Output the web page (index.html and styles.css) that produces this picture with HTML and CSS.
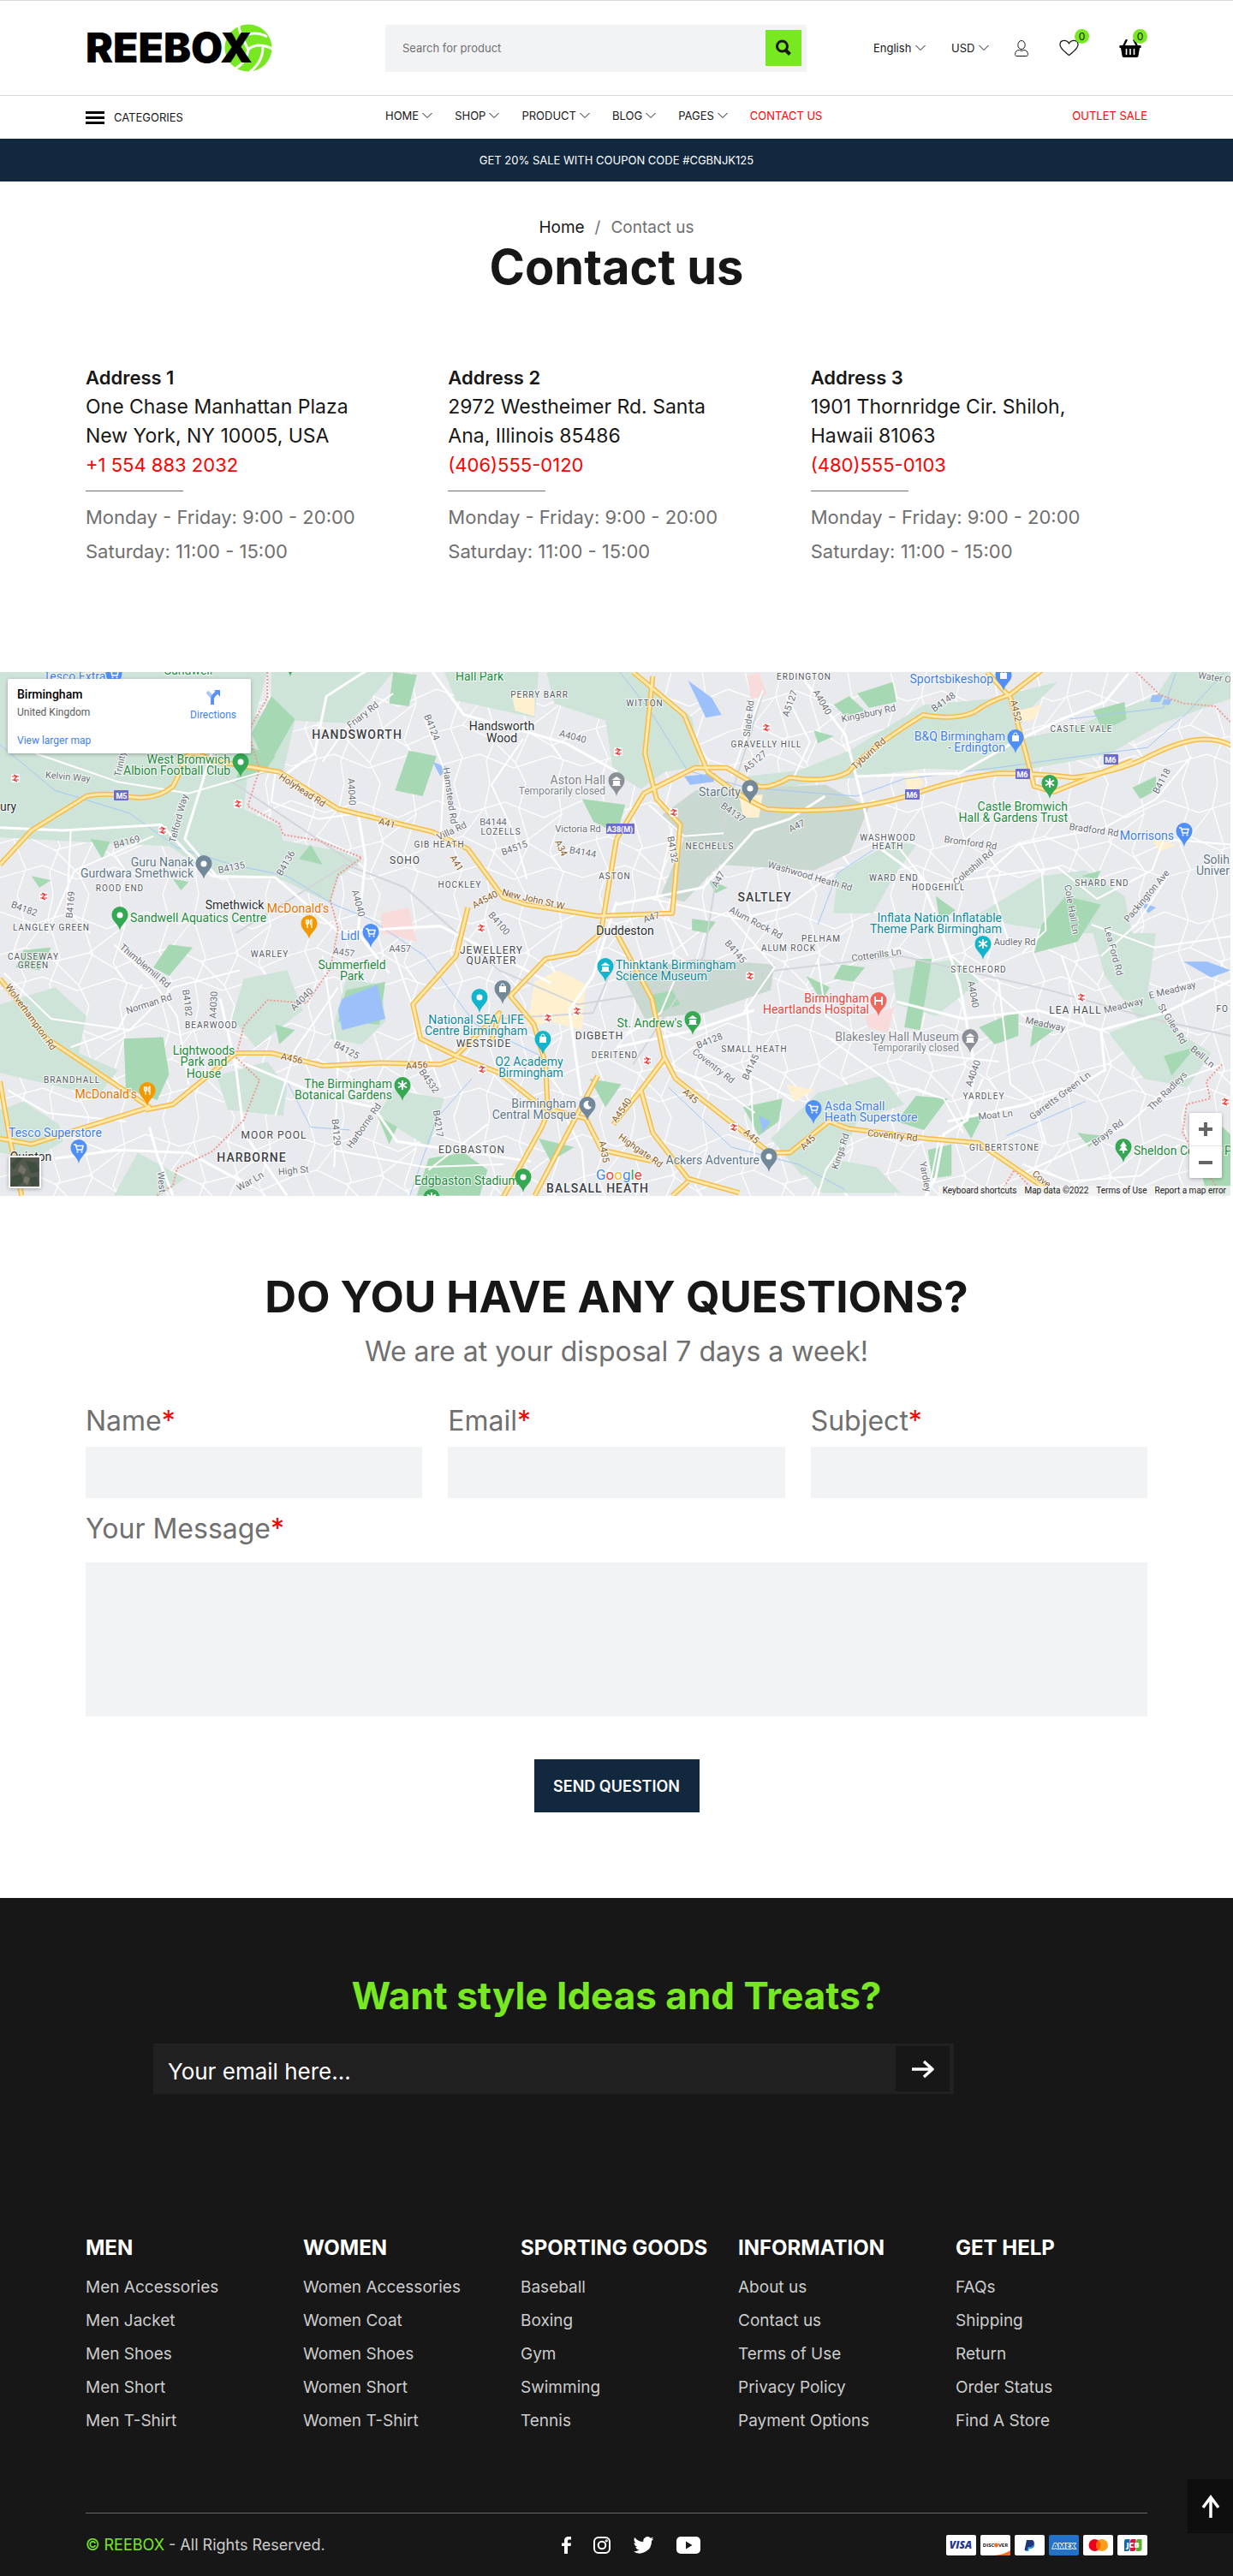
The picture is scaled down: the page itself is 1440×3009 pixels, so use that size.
FILE: index.html
```
<!DOCTYPE html>
<html lang="en">
<head>
<meta charset="utf-8">
<meta name="viewport" content="width=device-width, initial-scale=1">
<title>Contact us – Reebox</title>
<link rel="stylesheet" href="styles.css">
</head>
<body>
<svg class="defs" aria-hidden="true">
  <symbol id="chevron" viewBox="0 0 12 8"><path d="M.5 1l5.500 5.500L11.500 1" fill="none" stroke="currentColor"/></symbol>
</svg>

<header>
  <div class="topbar wrap">
    <a class="logo" href="#" aria-label="Reebox">
      <svg viewBox="0 0 218 56" width="218" height="56">
        <circle cx="190" cy="28" r="27.500" fill="#78e821"/>
        <g fill="none" stroke="#fff" stroke-width="3">
          <path d="M179 0c0 7 1 10 4 15M182 15c10-5 21-5 30 0M182 14l8 16M190 30c7-7 18-6 28-1M190 29c-1 9-6 18-15 23M207 27c0 12-5 21-15 29M174 21l6 17"/>
        </g>
        <text class="logo-text" x="0" y="45">REEBOX</text>
      </svg>
    </a>
    <form class="search">
      <input type="search" aria-label="Search for product" placeholder="Search for product">
      <button type="button" aria-label="Search"><svg width="20" height="20" viewBox="0 0 20 20" fill="none" stroke="#171717"><circle cx="8.500" cy="8" r="6" stroke-width="3"/><path d="M12.500 12.500l5 5" stroke-width="4"/></svg></button>
    </form>
    <div class="tools">
      <label class="pick"><select aria-label="Language"><option>English</option></select><svg width="12" height="8"><use href="#chevron"/></svg></label>
      <label class="pick"><select aria-label="Currency"><option>USD</option></select><svg width="12" height="8"><use href="#chevron"/></svg></label>
      <a class="tool" href="#" aria-label="Account"><svg width="16" height="19" viewBox="0 0 16 19" fill="none" stroke="#171717"><ellipse cx="8" cy="5.500" rx="4.200" ry="5"/><path d="M.6 16.500c0-3 1.600-5 4.600-5 2 1 3.600 1 5.600 0 3 0 4.600 2 4.600 5 0 1-.6 2-1.600 2H2.200c-1 0-1.600-1-1.600-2z"/></svg></a>
      <a class="tool" href="#" aria-label="Wishlist"><svg width="23" height="20" viewBox="0 0 24 20" fill="none" stroke="#171717" stroke-width="1.300"><path d="M12 19C7 14.500 1 11 1 5.800 1 0 9 -.8 12 4.500 15-.8 23 0 23 5.800 23 11 17 14.500 12 19z"/></svg><span class="badge">0</span></a>
      <a class="tool" href="#" aria-label="Basket"><svg width="26" height="21" viewBox="0 0 26 21"><path d="M8.500 1L4.500 9M17.500 1l4 8" stroke="#000" stroke-width="2.400" stroke-linecap="round"/><path d="M1 7h24c1 0 1 3 0 3h-1l-1.500 9c-.2 1-.8 2-2 2h-15c-1.200 0-1.800-1-2-2L2 10H1C0 10 0 7 1 7z"/><path d="M8.500 11.500v6M13 11.500v6M17.500 11.500v6" stroke="#fff" stroke-width="1.600" stroke-linecap="round"/></svg><span class="badge">0</span></a>
    </div>
  </div>
  <div class="navbar">
    <div class="wrap navrow">
      <button class="categories" type="button"><svg width="22" height="15" viewBox="0 0 22 15"><path d="M0 1.500h22M0 7.500h22M0 13.500h22" stroke="#000" stroke-width="3"/></svg>CATEGORIES</button>
      <nav>
        <a href="#">HOME<svg width="12" height="8"><use href="#chevron"/></svg></a>
        <a href="#">SHOP<svg width="12" height="8"><use href="#chevron"/></svg></a>
        <a href="#">PRODUCT<svg width="12" height="8"><use href="#chevron"/></svg></a>
        <a href="#">BLOG<svg width="12" height="8"><use href="#chevron"/></svg></a>
        <a href="#">PAGES<svg width="12" height="8"><use href="#chevron"/></svg></a>
        <a class="red" href="#">CONTACT US</a>
      </nav>
      <a class="red outlet" href="#">OUTLET SALE</a>
    </div>
  </div>
  <p class="promo">GET 20% SALE WITH COUPON CODE #CGBNJK125</p>
</header>

<main>
  <section class="intro">
    <p class="crumbs"><a href="#">Home</a><span>/</span><span>Contact us</span></p>
    <h1>Contact us</h1>
  </section>

  <section class="addresses wrap">
    <address>
      <h2>Address 1</h2>
      <p class="street-lines">One Chase Manhattan Plaza<br>New York, NY 10005, USA</p>
      <a class="red" href="tel:+15548832032">+1 554 883 2032</a>
      <p class="hours">Monday - Friday: 9:00 - 20:00<br>Saturday: 11:00 - 15:00</p>
    </address>
    <address>
      <h2>Address 2</h2>
      <p class="street-lines">2972 Westheimer Rd. Santa<br>Ana, Illinois 85486</p>
      <a class="red" href="tel:4065550120">(406)555-0120</a>
      <p class="hours">Monday - Friday: 9:00 - 20:00<br>Saturday: 11:00 - 15:00</p>
    </address>
    <address>
      <h2>Address 3</h2>
      <p class="street-lines">1901 Thornridge Cir. Shiloh,<br>Hawaii 81063</p>
      <a class="red" href="tel:4805550103">(480)555-0103</a>
      <p class="hours">Monday - Friday: 9:00 - 20:00<br>Saturday: 11:00 - 15:00</p>
    </address>
  </section>

  <section class="map" aria-label="Map of Birmingham">
    <svg class="map-canvas" viewBox="0 0 1437 612">
      <defs>
        <pattern id="streets" width="170" height="130" patternUnits="userSpaceOnUse">
          <path d="M0 20L40 34 80 22 125 40 170 20M0 70l30-8 34 16 40-10 30 18 36-16M0 110l50-14 40 16 44-14 36 12M20 0l8 30-12 36 14 34-10 30M62 0l-6 28 14 46-12 30 4 26M104 0l-8 30 12 40-16 36 12 24M140 0l6 36-14 44 16 24-8 26M30 62l26-34M104 68l42-32M64 78l28 28M134 86l14 18" fill="none" stroke="#fff" stroke-width="1.200"/>
        </pattern>
        <g id="pin"><path d="M0 0C-1.500-8-9.500-10.500-9.500-18.500a9.500 9.500 0 0 1 19 0C9.500-10.500 1.500-8 0 0z"/></g>
        <g id="dot"><use href="#pin"/><circle cy="-18" r="3.500" fill="#fff"/></g>
        <g id="bag"><use href="#pin"/><path d="M-4-21h8v7h-8z" fill="#fff"/><path d="M-2-20v-2a2 2 0 0 1 4 0v2" fill="none" stroke="#fff"/></g>
        <g id="cart"><use href="#pin"/><path d="M-6-22h2.500l1.500 6h6l1-4.500h-8" fill="none" stroke="#fff" stroke-width="1.500"/><circle cx="-1.500" cy="-13.500" r="1.100" fill="#fff"/><circle cx="3.500" cy="-13.500" r="1.100" fill="#fff"/></g>
        <g id="fork"><use href="#pin"/><path d="M-3.500-23v4a1.500 1.500 0 0 0 3 0v-4M-2-23v10M3-13v-10c-2 1-2 4-1.500 6H3" fill="none" stroke="#fff" stroke-width="1.200"/></g>
        <g id="flower"><use href="#pin"/><path d="M0-24v11M-5-21.500l10 6M5-21.500l-10 6" stroke="#fff" stroke-width="2"/></g>
        <g id="hall"><use href="#pin"/><path d="M-5.500-19L0-23l5.500 4zM-4-18h8v5h-8zM-5-13h10v1H-5z" fill="#fff"/></g>
        <g id="rail"><rect x="-5" y="-5" width="10" height="10" rx="2" fill="#fff"/><path d="M-4-2h8M-4 2h8M-2-4L2-2-2 2 2 4" stroke="#e53935" stroke-width="1.200" fill="none"/></g>
      </defs>
      <rect width="1437" height="612" fill="#e8eaed"/>
      <rect width="1437" height="612" fill="url(#streets)"/>
      <!-- Terrain and roads are plotted in survey units: 3136 wide, 1852 tall. -->
      <g class="plot" transform="translate(0 -5) scale(.4592 .3333)">
        <g fill="#cfe4d8">
          <path d="M0 15h680l-30 150 100 20-30 180-90 10-10 120 90 60 10 50 150 40 50 30-60 60-20 90-120-80-180-20-110-100-160-10-270-20-90-90-30-100L0 330z"/>
          <path d="M690 15h310l-110 180-140-10-60 50z"/>
          <path d="M1130 15h240l-10 160-200-60zM1390 15h220l150 160 20 170-90 20-60 60-70-60-20-180-130-60z"/>
          <path d="M1900 380l130-20 130-70 190-160 160-20 180-60-60 80-80 160-180 60-340 60-120 50z"/>
          <path d="M2300 330l400-110 240-120 40-85h156v90l-180 90-140 110-240 60-276-15z"/>
          <path d="M2130 720l140-110 60 10-60 120-50 120-100 0zM2480 870l170-140 110-20 100 90 20 130h-160l-150-30zM2780 930h160l-20 200 80 170-60 60-40-120-90-160z"/>
          <path d="M2820 1280l110-60 150 130-60 120-110-30zM0 1180l140-60 80 100-20 130 100 60-50 90-250-80z"/>
          <path d="M0 1550l60-30 90 80 10 60-70 60-90-20zM620 1090l110-30 40 140-120 130-60-100z"/>
          <path d="M550 1430l130-50 50 90-10 100-140-20zM880 1090l90 20 10 130-60 80-80-20z"/>
          <path d="M1000 1480l130 30-40 170-130-110z"/>
          <path d="M1960 1650l120-160 160-60 60 100-120 60-40 130-100 60zM2070 1710l160 40 60 90h-200l-60-90z"/>
          <path d="M2270 1060l160-40 60 80-110 120-100-40zM350 1700l120 90-60 60h-120z"/>
        </g>
        <g fill="#c9d8d0">
          <path d="M1770 430l330-20 110 80-50 160-90 60-240-20-90 130-60-20 60-200-60-80z"/>
          <path d="M1580 1070l190-50 200 20-10 90-170 80-150 20z"/>
        </g>
        <g fill="#a6d8b3">
          <path d="M620 270l80 40-30 60-70 30zM690 100l60 80-70 170-40-120zM1000 15l60 10-20 110-50-10zM1040 290l70 20-35 140-70-20z"/>
          <path d="M315 1300l100-5 15 130-30 90-80-40zM430 970l60 10-60 100-40-30zM700 1250l50 20-40 50zM60 990l70-10-30 80-60-10z"/>
          <path d="M860 1240l20-110 100-30-15 150zM1090 1720l90-20 60 60-20 90h-160zM1370 1650l90 30-60 50zM960 1570l50 40-20 60zM230 600l50 10-20 60zM440 740l40 10-20 30zM80 730l50 15-30 25z"/>
          <path d="M1480 460l110 20-20 100-60-40zM1500 1440l80 20-40 80z"/>
          <path d="M2180 90l90-40 10 70-70 20zM2120 130l40-30 40 50-50 20zM2070 220l50 20-40 25zM2780 150l80-30 5 60-60 40zM2880 420l60-40 0 50-40 30z"/>
          <path d="M2140 1040l60 10-30 50-50-10zM2330 1020l40 0-30 250-40-10zM2650 900l60-100 90 30-60 130-110 40zM2380 800l50 50-40 40zM2750 730l50-20-10 30z"/>
          <path d="M2490 1260l100-60 0 90-60 30zM2630 1230l50 40-60 60zM1650 1150l60-20 20 50-60 30z"/>
          <path d="M1890 1540l100-30-10 80-50 50zM2330 1500l80 10-60 110-70-30zM2440 1580l60-10-30 80zM2360 1690l60-20 0 110-50 10zM2740 1630l60 10-30 40zM2050 1080l60 40-20 50zM3030 1630l50-60 60 80v200h-70z"/>
          <path d="M1760 880l60 10-20 40-40-10zM1800 740l50 30-30 20zM2960 1360l80-30-60 100zM790 620l30 70-60-20z"/>
        </g>
        <g fill="#fff1cf">
          <path d="M1360 1100l60-40 70 50-10 160-80-30-60 20zM2300 380l30-20 20 50-40 25zM1880 450l60-5-10 80h-40zM2590 150l60-20-20 50-30 10zM1300 80l60 30v60l-50-20zM2000 1460l70 20-50 40zM2930 600l60 20-40 25z"/>
        </g>
        <path d="M970 860l70-20 20 120-60-20-30-10zM2200 1220l74-30-16 90-50-20zM1900 30l30-15 20 80-40 15z" fill="#fadbdb"/>
        <g fill="#9cc0f9">
          <path d="M870 1160l90-50 20 120-110 40-10-70zM1750 45l60 60 25 60-40 10zM1100 330l40 20-20 30zM1740 380l80-10-5 30-60 10zM3010 1030h60l60 30-50 25zM1930 1570l30 20-20 40zM2900 820l40 20-20 20z"/>
          <path d="M2930 95l30 0-10 25h-25zM2960 110l20 0-5 20h-20z"/>
        </g>
        <g class="river"><path d="M0 270l140 160 190 80 120 120 140 60 140 40 120 100 90 50 140 130 130 240 180 120"/><path d="M1568 0l90 160 90 200 150 60 280 30 120-60 240-40 210-40 170-30 100-120 100-150"/><path d="M1200 1440l-90 140-70 280M1700 1470l160 210 170 60 120 90M2080 900l50-180 100-90M730 1450l60 160 100 10M2990 20l-30 120-240 40M2560 1640l200-120"/></g>
        <g class="rail"><path d="M600 930l280-240 150 80 240 290 200 120 140-30 180-60 500-80 380 120 260 100 400 120M1568 1020l-60 190-240 20M1610 1390l180-380 60-520 90-400M150 15l380 330 380 350"/></g>
        <g class="street wide">
          <path d="M0 560l160 10 250-20 60 90 70 90 160 5 160 190 260-20 170 120 110 80"/>
          <path d="M560 200l-90 400 80 130M720 380l80-80 30-200 90-80 80-60M910 500l20 170-20 260 80 140M1100 15l80 150 160 60 100 40 130 100"/>
          <path d="M2030 15l120 220 30 160 40 220 120 120 40 130 60 240 40 300-20 180-60 50-20 150-100 250"/>
          <path d="M1568 830l220-60 130-200 90-40 90-80M2180 380l260-10 140-110 120-80 110-60 60-100"/>
          <path d="M2280 1170l170 60 190-30 160 70 160-60 180-120M2800 1270l10 140-50 40-150 80-200 60M590 1370l230 130 130 40 60 120 340 70"/>
          <path d="M140 1720l160-30 180 10 160 120M560 1160l40 240 20 230 110 220M380 1610l20 100 40 140M1568 1330l200-60 150-70M1568 820l-60 260-60 120 30 300"/>
        </g>
        <g class="street">
          <path d="M90 300l210 100 180 40 200-80M180 570l-10 280 60 80M390 590l-200 120-70 220M700 370l-10 100 120 60 100-20M1000 90l-120 120-60 120M1080 180l50 180-10 250M1330 250l-80 160 60 180 30 150"/>
          <path d="M2120 720l-120 120-120 40-220-70M2570 980l-60-260 80-100 220-60 130-100 90-150M2280 620l80 140 330-60 100 110 140-100 30-110 170 20M2590 610l60 110 10 200-60 80M1940 80l-80 300M2000 100l60 160-40 120"/>
          <path d="M1650 480l90 110 100-10M1710 560l-40 240 80 210M1850 860l120 190-80 160M2420 1010l200 230M2800 1010l90-110 80-170M3136 940l-200 40-160-80"/>
          <path d="M10 1070l120 160 200 40 110-150 170-60M290 970l100 130 60 120 30 240M860 1120l-110 220-50 230M1000 990l60 240 60 240M820 1010l40 360-10 380M1420 1520l60 170 10 160M1240 1600l-150 160M850 1690l230 60 200-10"/>
          <path d="M1760 1330l180 120 80 70M1900 1180l20 560M2100 1290l160 160 140 60 50 120M2500 1440l-60 180M2540 1100l30 360 60 60 30 150M2700 1010l60 240M3110 1390l-120 60-130 160-130 80-140 90M1700 1400l120 60 100 100M2160 1640l-60 120-20 90M2390 1640l-30 210"/>
          <path d="M180 1330l120-60 60-160M20 1480l100 80 200 30M1720 1080l-40 130-90 80M2080 1020l20 200 120 100 180 40 140 20M2600 1740l120 60 180-20 100-110"/>
        </g>
        <g class="border"><path d="M680 15l0 90-50 120 30 130-30 130 80 60 10 40 90 20 110 60-60 60-20 90 20 100-20 140-60 120-100-10-60 90-20 110 60 80-40 140-80 110-90 60-10 60-40 30 20 80 30 80 15 120"/><path d="M2890 15l60 80 60 30 80 10 50 70M3108 1390l-40 60 10 60-60 20-10 100 60 140 50 90M2540 1850l40-90 40 60 20 30"/></g>
        <g class="casing"><g id="main-roads">
          <path d="M0 690L80 570 220 450q30-10 80-5 90 30 140-30 20-50 30-100 20-30 70 10l170 40 150 130 240 80 90 60 90 170 60 25 180 40 190-10 20-310-60-90-30-160 10-130 10-140"/>
          <path d="M1610 15l130 150 60 200 40 40q60 60 110 90 80 10 180 0 90-10 190-50 120-60 220-75 100 0 190 15 120-20 200-80 60-40 100-50 60-15 105 20"/>
          <path d="M1568 600l70-160 130-90 80 0 80 65q30 10 80-30 100 20 150-20 40-70 190-200 80 20 130-10 40-40 90-60l80-85M2510 15l60 90 40 200 20 110 50 20 200-110"/>
          <path d="M1568 600l-40 330-60 70-80 20-90 130 60 100 30 140 5 170-15 50-100 250M1190 840l-30 170-110 170 20 120 90 60 110 60 110 120 110 40 40 110 130 40M1160 1360l110-150-20 100"/>
          <path d="M0 1090l120 210 260 240-210 90-90 40-80-20M370 1550l70-20 160-180 90 0 130 45 150-10 150 5 40-20M0 1450l25 200 30 200"/>
          <path d="M1568 930l90 230 30 200 30 80 120 130 120 130 50 0 100-110 50 25 200 35 130 15 160 150 40 60M1690 1370l-60 110-70 120M1630 1480l30 150 90 160 130 50M1750 1800l-40 50M1360 1850l160-420"/>
        </g></g>
        <use class="lane" href="#main-roads"/>
      </g>
      <g class="rails">
        <use href="#rail" x="18" y="124"/><use href="#rail" x="278" y="154"/><use href="#rail" x="190" y="185"/><use href="#rail" x="51" y="262"/><use href="#rail" x="562" y="299"/><use href="#rail" x="895" y="65"/><use href="#rail" x="722" y="93"/><use href="#rail" x="787" y="164"/><use href="#rail" x="674" y="396"/><use href="#rail" x="640" y="404"/><use href="#rail" x="563" y="464"/><use href="#rail" x="876" y="355"/><use href="#rail" x="1263" y="380"/><use href="#rail" x="756" y="454"/><use href="#rail" x="857" y="532"/><use href="#rail" x="1431" y="502"/>
      </g>
      <g class="t road">
        <text transform="translate(426 53) rotate(-38)">Friary Rd</text><text transform="translate(501 66) rotate(68)">B4124</text><text transform="translate(668 79) rotate(15)">A4040</text><text transform="translate(79 126) rotate(5)">Kelvin Way</text><text transform="translate(144 108) rotate(-78)">Trinity</text><text transform="translate(212 172) rotate(-75)">Telford Way</text><text transform="translate(407 140) rotate(87)">A4040</text><text transform="translate(522 145) rotate(82)">Hamstead Rd</text><text x="576" y="179">B4144</text><text x="675" y="187">Victoria Rd</text><text transform="translate(529 189) rotate(-25)">Villa Rd</text><text transform="translate(602 209) rotate(-20)">B4515</text><text transform="translate(680 214) rotate(10)">B4144</text><text transform="translate(149 202) rotate(-15)">B4169</text><text transform="translate(86 272) rotate(-85)">B4169</text><text transform="translate(271 232) rotate(-12)">B4135</text><text transform="translate(337 225) rotate(-60)">B4136</text><text transform="translate(27 280) rotate(20)">B4182</text><text transform="translate(415 271) rotate(75)">A4040</text><text transform="translate(580 296) rotate(50)">B4100</text>
        <text transform="translate(878 55) rotate(-83)">Slade Rd</text><text transform="translate(926 38) rotate(-70)">A5127</text><text transform="translate(957 37) rotate(60)">A4040</text><text transform="translate(1015 52) rotate(-12)">Kingsbury Rd</text><text transform="translate(1104 38) rotate(-35)">B4148</text><text transform="translate(884 107) rotate(-40)">A5127</text><text transform="translate(1360 129) rotate(-62)">B4118</text><text transform="translate(854 167) rotate(35)">B4137</text><text transform="translate(932 183) rotate(-25)">A47</text><text transform="translate(782 208) rotate(80)">B4132</text><text transform="translate(1133 203) rotate(8)">Bromford Rd</text><text transform="translate(1139 231) rotate(-40)">Coleshill Rd</text><text transform="translate(1277 188) rotate(8)">Bradford Rd</text><text transform="translate(945 242) rotate(16)">Washwood Heath Rd</text><text transform="translate(842 244) rotate(-60)">A47</text><text transform="translate(1248 278) rotate(80)">Cole Hall Ln</text><text transform="translate(1342 264) rotate(-50)">Packington Ave</text><text transform="translate(762 290) rotate(-20)">A47</text><text transform="translate(881 296) rotate(28)">Alum Rock Rd</text><text transform="translate(1418 10) rotate(8)">Water O</text>
        <text transform="translate(167 346) rotate(40)">Thimblemill Rd</text><text transform="translate(175 391) rotate(-18)">Norman Rd</text><text transform="translate(215 387) rotate(83)">B4182</text><text transform="translate(253 389) rotate(-87)">A4030</text><text transform="translate(401 331) rotate(8)">A457</text><text x="467" y="327">A457</text><text transform="translate(355 385) rotate(-45)">A4040</text><text transform="translate(403 445) rotate(28)">B4125</text><text transform="translate(498 480) rotate(55)">B4532</text><text transform="translate(508 528) rotate(82)">B4217</text><text transform="translate(389 538) rotate(85)">B4129</text><text transform="translate(428 532) rotate(-55)">Harborne Rd</text><text transform="translate(343 586) rotate(-5)">High St</text><text transform="translate(294 598) rotate(-30)">War Ln</text><text transform="translate(185 596) rotate(85)">West</text>
        <text transform="translate(856 329) rotate(50)">B4145</text><text transform="translate(1024 334) rotate(-8)">Cotterills Ln</text><text x="1185" y="319">Audley Rd</text><text transform="translate(1133 377) rotate(80)">A4040</text><text transform="translate(1297 327) rotate(75)">Lea Ford Rd</text><text transform="translate(1313 393) rotate(-14)">Meadway</text><text transform="translate(1370 375) rotate(-14)">E Meadway</text><text transform="translate(1220 415) rotate(12)">Meadway</text><text transform="translate(1366 413) rotate(58)">St Giles Rd</text><text transform="translate(1402 452) rotate(40)">Bell Ln</text><text transform="translate(830 434) rotate(-22)">B4128</text><text transform="translate(831 463) rotate(38)">Coventry Rd</text><text transform="translate(880 463) rotate(-65)">B4145</text><text transform="translate(1140 470) rotate(-70)">A4040</text><text transform="translate(1240 498) rotate(-37)">Garretts Green Ln</text><text transform="translate(1366 492) rotate(-45)">The Radleys</text><text transform="translate(1163 521) rotate(-6)">Moat Ln</text><text transform="translate(1296 541) rotate(-38)">Brays Rd</text><text transform="translate(985 561) rotate(-72)">Kings Rd</text><text transform="translate(1077 590) rotate(80)">Yardley</text>
      </g>
      <g class="t trunk">
        <text transform="translate(351 141) rotate(33)">Holyhead Rd</text><text transform="translate(451 180) rotate(15)">A41</text><text transform="translate(652 207) rotate(65)">A34</text><text transform="translate(530 225) rotate(60)">A41</text><text transform="translate(568 269) rotate(-28)">A4540</text><text transform="translate(622 269) rotate(13)">New John St W</text><text transform="translate(1183 46) rotate(78)">A452</text><text transform="translate(1017 98) rotate(-42)">Tyburn Rd</text><text transform="translate(33 405) rotate(54)">Wolverhampton Rd</text><text transform="translate(340 455) rotate(12)">A456</text><text transform="translate(487 463) rotate(-4)">A456</text><text transform="translate(702 561) rotate(80)">A435</text><text transform="translate(804 498) rotate(42)">A45</text><text transform="translate(875 545) rotate(42)">A45</text><text transform="translate(946 552) rotate(-45)">A45</text><text transform="translate(1042 545) rotate(6)">Coventry Rd</text><text transform="translate(746 562) rotate(35)">Highgate Rd</text><text transform="translate(729 514) rotate(-55)">A4540</text><text transform="translate(1214 595) rotate(40)">Cove</text>
      </g>
      <g class="t small">
        <text x="630" y="30">PERRY BARR</text><text x="585" y="190">LOZELLS</text><text x="513" y="205">GIB HEATH</text><text x="537" y="252">HOCKLEY</text><text x="718" y="242">ASTON</text><text x="140" y="256">ROOD END</text><text x="60" y="302">LANGLEY GREEN</text><text x="939" y="9">ERDINGTON</text><text x="753" y="40">WITTON</text><text x="1263" y="70">CASTLE VALE</text><text x="895" y="88">GRAVELLY HILL</text><text x="829" y="207">NECHELLS</text><text x="1037" y="197">WASHWOOD</text><text x="1037" y="207">HEATH</text><text x="1044" y="244">WARD END</text><text x="1096" y="255">HODGEHILL</text><text x="1287" y="250">SHARD END</text><text x="39" y="336">CAUSEWAY</text><text x="39" y="346">GREEN</text><text x="247" y="416">BEARWOOD</text><text x="315" y="333">WARLEY</text><text x="84" y="480">BRANDHALL</text><text x="718" y="451">DERITEND</text><text x="959" y="315">PELHAM</text><text x="921" y="326">ALUM ROCK</text><text x="1143" y="351">STECHFORD</text><text x="881" y="444">SMALL HEATH</text><text x="1149" y="499">YARDLEY</text><text x="1173" y="559">GILBERTSTONE</text><text class="end" x="1435" y="397">FO</text>
      </g>
      <g class="t mid">
        <text x="473" y="224">SOHO</text><text x="574" y="329">JEWELLERY</text><text x="574" y="341">QUARTER</text><text x="565" y="438">WESTSIDE</text><text x="700" y="429">DIGBETH</text><text x="320" y="545">MOOR POOL</text><text x="551" y="562">EDGBASTON</text><text x="1256" y="399">LEA HALL</text>
      </g>
      <g class="t big">
        <text x="417" y="78">HANDSWORTH</text><text x="893" y="268">SALTLEY</text><text x="294" y="572">HARBORNE</text><text x="698" y="608">BALSALL HEATH</text>
      </g>
      <g class="t town">
        <text x="586" y="68">Handsworth</text><text x="586" y="82">Wood</text><text class="start" x="0" y="162">ury</text><text x="274" y="277">Smethwick</text><text x="730" y="307">Duddeston</text><text x="36" y="571">Quinton</text>
      </g>
      <g class="t green">
        <text x="220" y="3">Sandwell</text><text x="560" y="10">Hall Park</text><text class="end" x="269" y="107">West Bromwich</text><text class="end" x="269" y="120">Albion Football Club</text><text class="start" x="152" y="292">Sandwell Aquatics Centre</text><text class="end" x="1247" y="162">Castle Bromwich</text><text class="end" x="1247" y="175">Hall &amp; Gardens Trust</text><text x="411" y="347">Summerfield</text><text x="411" y="360">Park</text><text x="238" y="447">Lightwoods</text><text x="238" y="460">Park and</text><text x="238" y="474">House</text><text class="end" x="458" y="486">The Birmingham</text><text class="end" x="458" y="499">Botanical Gardens</text><text class="start" x="484" y="599">Edgbaston Stadium</text><text class="end" x="797" y="415">St. Andrew's</text><text class="start" x="1324" y="564">Sheldon Country Pa</text>
      </g>
      <g class="t blue">
        <text x="87" y="10">Tesco Extra</text><text class="end" x="1160" y="13">Sportsbikeshop</text><text class="end" x="1174" y="80">B&amp;Q Birmingham</text><text class="end" x="1174" y="93">- Erdington</text><text class="end" x="1371" y="196">Morrisons</text><text class="end" x="420" y="313">Lidl</text><text class="start" x="10" y="543">Tesco Superstore</text><text class="start" x="963" y="512">Asda Small</text><text class="start" x="963" y="525">Heath Superstore</text>
      </g>
      <g class="t slate">
        <text class="end" x="226" y="227">Guru Nanak</text><text class="end" x="226" y="240">Gurdwara Smethwick</text><text class="end" x="865" y="145">StarCity</text><text class="end" x="1436" y="224">Solih</text><text class="end" x="1436" y="237">Univer</text><text class="end" x="673" y="509">Birmingham</text><text class="end" x="673" y="522">Central Mosque</text><text class="end" x="887" y="575">Ackers Adventure</text>
      </g>
      <g class="t grey">
        <text class="end" x="707" y="131">Aston Hall</text><text class="end sub" x="707" y="143">Temporarily closed</text><text class="end" x="1120" y="431">Blakesley Hall Museum</text><text class="end sub" x="1120" y="443">Temporarily closed</text>
      </g>
      <g class="t teal">
        <text class="end" x="1170" y="292">Inflata Nation Inflatable</text><text class="end" x="1170" y="305">Theme Park Birmingham</text><text class="end" x="612" y="411">National SEA LIFE</text><text class="end" x="616" y="424">Centre Birmingham</text><text x="618" y="460">O2 Academy</text><text x="620" y="473">Birmingham</text><text class="start" x="719" y="347">Thinktank Birmingham</text><text class="start" x="719" y="360">Science Museum</text>
      </g>
      <g class="t orange"><text x="348" y="281">McDonald's</text><text class="end" x="160" y="498">McDonald's</text></g>
      <g class="t rose"><text class="end" x="1015" y="386">Birmingham</text><text class="end" x="1015" y="399">Heartlands Hospital</text></g>
      <g class="pins">
        <g fill="#34a853"><use href="#dot" x="281" y="123"/><use href="#dot" x="140" y="302"/><use href="#dot" x="611" y="608"/><use href="#dot" x="339" y="5"/><use href="#flower" x="1226" y="148"/><use href="#flower" x="470" y="501"/><use href="#flower" x="504" y="632"/><use href="#hall" x="809" y="424"/></g>
        <g fill="#34a853"><use href="#pin" x="1312" y="573"/><path d="M1312 548l-4 6h2l-3 5h4v3h2v-3h4l-3-5h2z" fill="#fff"/></g>
        <g fill="#4f8ff7"><use href="#cart" x="133" y="20"/><use href="#cart" x="433" y="322"/><use href="#cart" x="92" y="574"/><use href="#cart" x="950" y="528"/><use href="#cart" x="1383" y="204"/><use href="#bag" x="1172" y="22"/><use href="#bag" x="1186" y="95"/></g>
        <g fill="#12b5cb"><use href="#flower" x="1148" y="336"/><use href="#dot" x="560" y="398"/><use href="#bag" x="634" y="447"/><use href="#hall" x="707" y="362"/></g>
        <g fill="#73899a"><use href="#dot" x="238" y="242"/><use href="#dot" x="876" y="154"/><use href="#dot" x="898" y="584"/><use href="#bag" x="587" y="388"/><use href="#pin" x="686" y="524"/><path d="M688 501a5 5 0 1 0 3 7 4 4 0 0 1-3-7z" fill="#fff"/></g>
        <g fill="#8a8f98"><use href="#hall" x="720" y="145"/><use href="#hall" x="1133" y="445"/></g>
        <g fill="#f29900"><use href="#fork" x="361" y="312"/><use href="#fork" x="172" y="507"/></g>
        <g fill="#f2665c"><use href="#pin" x="1026" y="402"/><path d="M1022 379v10M1030 379v10M1022 384h8" stroke="#fff" stroke-width="2"/></g>
      </g>
      <g class="shields">
        <rect x="133" y="138" width="17" height="12" rx="1"/><text x="142" y="148">M5</text>
        <rect x="708" y="177" width="33" height="12" rx="1"/><text x="724" y="187">A38(M)</text>
        <rect x="1186" y="113" width="17" height="12" rx="1"/><text x="1194" y="123">M6</text>
        <rect x="1289" y="96" width="17" height="12" rx="1"/><text x="1297" y="106">M6</text>
        <rect x="1057" y="137" width="17" height="12" rx="1"/><text x="1065" y="147">M6</text>
      </g>
      <text class="google" x="696" y="593"><tspan fill="#4285f4">G</tspan><tspan fill="#ea4335">o</tspan><tspan fill="#fbbc05">o</tspan><tspan fill="#4285f4">g</tspan><tspan fill="#34a853">l</tspan><tspan fill="#ea4335">e</tspan></text>
    </svg>
    <div class="place">
      <div class="place-text"><strong>Birmingham</strong><span>United Kingdom</span><a href="#">View larger map</a></div>
      <a class="directions" href="#"><svg width="18" height="19" viewBox="0 0 18 19"><path d="M2 3l6 7" stroke="#a9c5fb" stroke-width="4"/><path d="M8 18v-6c0-3 1-4 5-8" stroke="#5b8ff9" stroke-width="4" fill="none"/><path d="M10 1h7v8z" fill="#5b8ff9"/></svg>Directions</a>
    </div>
    <button class="satellite" type="button" aria-label="Show satellite imagery"><svg viewBox="0 0 34 34" width="34" height="34"><rect width="34" height="34" fill="#53594f"/><path d="M0 8l9-8h6L4 14zM18 4l12 2 4 10-9 3zM2 22l10-3 4 9-9 6H0zM22 24l9-2 3 10-10 2z" fill="#3f4d3f"/><path d="M12 8l7 6-3 6-7-4zM17 22l6 2-3 8-5-4z" fill="#777267"/></svg></button>
    <div class="zoom"><button type="button" aria-label="Zoom in"><svg width="18" height="18"><path d="M9 1v16M1 9h16" stroke="#666" stroke-width="4"/></svg></button><button type="button" aria-label="Zoom out"><svg width="18" height="18"><path d="M1 9h16" stroke="#666" stroke-width="4"/></svg></button></div>
    <div class="legal"><a href="#">Keyboard shortcuts</a><span>Map data ©2022</span><a href="#">Terms of Use</a><a href="#">Report a map error</a></div>
  </section>

  <section class="questions wrap">
    <h2>DO YOU HAVE ANY QUESTIONS?</h2>
    <p class="lead">We are at your disposal 7 days a week!</p>
    <form>
      <div class="fields">
        <div class="field"><label for="name">Name<b>*</b></label><input id="name" type="text" required></div>
        <div class="field"><label for="email">Email<b>*</b></label><input id="email" type="email" required></div>
        <div class="field"><label for="subject">Subject<b>*</b></label><input id="subject" type="text" required></div>
      </div>
      <div class="field message"><label for="message">Your Message<b>*</b></label><textarea id="message" required></textarea></div>
      <button class="send" type="submit">SEND QUESTION</button>
    </form>
  </section>
</main>

<footer>
  <div class="wrap">
    <h2 class="treats">Want style Ideas and Treats?</h2>
    <form class="newsletter">
      <input type="email" aria-label="Your email" placeholder="Your email here...">
      <button type="button" aria-label="Subscribe"><svg width="26" height="22" viewBox="0 0 26 22" fill="none" stroke="#fff" stroke-width="3.500"><path d="M0 11h24M14 2l10 9-10 9" stroke-linejoin="round"/></svg></button>
    </form>
    <div class="links">
      <section><h3>MEN</h3><ul><li><a href="#">Men Accessories</a></li><li><a href="#">Men Jacket</a></li><li><a href="#">Men Shoes</a></li><li><a href="#">Men Short</a></li><li><a href="#">Men T-Shirt</a></li></ul></section>
      <section><h3>WOMEN</h3><ul><li><a href="#">Women Accessories</a></li><li><a href="#">Women Coat</a></li><li><a href="#">Women Shoes</a></li><li><a href="#">Women Short</a></li><li><a href="#">Women T-Shirt</a></li></ul></section>
      <section><h3>SPORTING GOODS</h3><ul><li><a href="#">Baseball</a></li><li><a href="#">Boxing</a></li><li><a href="#">Gym</a></li><li><a href="#">Swimming</a></li><li><a href="#">Tennis</a></li></ul></section>
      <section><h3>INFORMATION</h3><ul><li><a href="#">About us</a></li><li><a href="#">Contact us</a></li><li><a href="#">Terms of Use</a></li><li><a href="#">Privacy Policy</a></li><li><a href="#">Payment Options</a></li></ul></section>
      <section><h3>GET HELP</h3><ul><li><a href="#">FAQs</a></li><li><a href="#">Shipping</a></li><li><a href="#">Return</a></li><li><a href="#">Order Status</a></li><li><a href="#">Find A Store</a></li></ul></section>
    </div>
    <div class="bottom">
      <p><a href="#">© REEBOX</a> - All Rights Reserved.</p>
      <div class="social">
        <a href="#" aria-label="Facebook"><svg width="11" height="20" viewBox="0 0 11 20" fill="#fff"><path d="M3 20v-9H0V7.500h3V5c0-3.500 2-5 5-5h3v3.500H9C7.500 3.500 7 4 7 5.500v2h4L10.500 11H7v9z"/></svg></a>
        <a href="#" aria-label="Instagram"><svg width="20" height="20" viewBox="0 0 20 20" fill="none" stroke="#fff" stroke-width="2"><rect x="1" y="1" width="18" height="18" rx="5"/><circle cx="10" cy="10" r="4.300"/><circle cx="15.300" cy="4.800" r=".6"/></svg></a>
        <a href="#" aria-label="Twitter"><svg width="25" height="20" viewBox="0 0 24 20" fill="#fff"><path d="M24 2.400c-.9.400-1.800.7-2.800.8 1-.6 1.800-1.600 2.200-2.700-1 .6-2 1-3.100 1.200A4.900 4.900 0 0 0 11.900 6.100 13.900 13.900 0 0 1 1.700.9a4.900 4.900 0 0 0 1.500 6.600c-.8 0-1.600-.2-2.200-.6v.1c0 2.400 1.700 4.400 3.900 4.800-.7.200-1.500.2-2.200.1.600 2 2.400 3.400 4.600 3.400A9.900 9.900 0 0 1 0 17.300 14 14 0 0 0 21.500 4.900c1-.7 1.800-1.600 2.500-2.500z"/></svg></a>
        <a href="#" aria-label="YouTube"><svg width="28" height="20" viewBox="0 0 28 20"><rect width="28" height="20" rx="5" fill="#fff"/><path d="M11 5.500v9l7.500-4.500z" fill="#171717"/></svg></a>
      </div>
      <div class="cards">
        <svg viewBox="0 0 35 24" role="img" aria-label="Visa"><rect width="35" height="24" rx="2" fill="#fff"/><text x="17" y="16" fill="#26348b" class="card-i">VISA</text></svg>
        <svg viewBox="0 0 35 24" role="img" aria-label="Discover"><rect width="35" height="24" rx="2" fill="#fff"/><path d="M16 24q12-1 19-6v4q0 2-2 2z" fill="#f26e21"/><text x="9.500" y="14" fill="#222" class="card-s">DISC</text><circle cx="18.500" cy="12" r="2.400" fill="#f26e21"/><text x="26.500" y="14" fill="#222" class="card-s">VER</text></svg>
        <svg viewBox="0 0 35 24" role="img" aria-label="PayPal"><rect width="35" height="24" rx="2" fill="#fff"/><path d="M16 8h5.500q2.500 1 1.500 5-1 3-4.500 3H17l-.7 3H12.500z" fill="#2a9ad9"/><path d="M14 6h6q3 0 2.500 4-.5 4-5 4h-2l-1 4H11.500z" fill="#1f3578"/></svg>
        <svg viewBox="0 0 35 24" role="img" aria-label="American Express"><rect width="35" height="24" rx="2" fill="#2272c9"/><text x="17.500" y="16" fill="#2272c9" stroke="#fff" stroke-width="1.600" paint-order="stroke" class="card-m">AMEX</text></svg>
        <svg viewBox="0 0 35 24" role="img" aria-label="Mastercard"><rect width="35" height="24" rx="2" fill="#fff"/><circle cx="13.500" cy="12" r="7" fill="#eb001b"/><circle cx="22" cy="12" r="7" fill="#f79e1b"/><path d="M17.800 6.500a7 7 0 0 1 0 11 7 7 0 0 1 0-11z" fill="#ff5f00"/></svg>
        <svg viewBox="0 0 35 24" role="img" aria-label="JCB"><rect width="35" height="24" rx="2" fill="#fff"/><path d="M10 5h4.500v11q0 3-3 3H8V8q0-3 2-3z" fill="#1566b1"/><path d="M17 5h4.500v11q0 3-3 3H15V8q0-3 2-3z" fill="#d8163d"/><path d="M24 5h4.500v11q0 3-3 3H22V8q0-3 2-3z" fill="#56b030"/><text x="18" y="15" fill="#fff" class="card-m">JCB</text></svg>
      </div>
    </div>
  </div>
  <a class="to-top" href="#" aria-label="Back to top"><svg width="22" height="27" viewBox="0 0 22 27" fill="none" stroke="#fff" stroke-width="3.500"><path d="M11 27V3M2 15l9-12 9 12"/></svg></a>
</footer>
</body>
</html>
```
FILE: styles.css
```
*{box-sizing:border-box}
body{margin:0;background:#fff;color:#171717;font-family:Inter,"Open Sans",sans-serif;font-size:13px}
h1,h2,h3,p,ul{margin:0;padding:0}
ul{list-style:none}
a{color:inherit;text-decoration:none}
button,input,select,textarea{font:inherit;color:inherit;border:0;border-radius:0;padding:0;margin:0;background:none}
svg{display:block}
.defs{position:absolute;width:0;height:0}
.wrap{margin:0 100px}
.red{color:#f00}

/* Header */
header{border-top:1px solid #d9d9d9}
.topbar{display:flex;align-items:center;height:110px}
.logo{flex:0 0 350px}
.logo svg{overflow:visible}
.logo-text{font-size:48px;font-weight:900}
.search{flex:0 1 492px;display:flex;height:55px;padding:6px;background:#f2f3f5}
.search input{flex:1;min-width:0;padding-left:14px}
.search input::placeholder{color:#707070;opacity:1}
.search button{width:42px;height:42px;display:grid;place-items:center;background:#78e821}
.tools{flex:1;display:flex;align-items:center;gap:30px;margin-left:78px;padding-right:7px}
.pick{display:grid;align-items:center}
.pick select,.pick svg{grid-area:1/1}
.pick select{appearance:none;padding-right:16px}
.pick svg{justify-self:end;pointer-events:none}
.tool{position:relative}
.tool+.tool{margin-left:6px}
.tool:last-child{margin-left:auto}
.badge{position:absolute;right:-12px;top:-12px;width:17px;height:17px;border-radius:50%;background:#78e821;font-size:12px;line-height:17px;text-align:center}
.tool:last-child .badge{right:-7px}
.navbar{border-top:1px solid #d9d9d9}
.navrow{display:flex;align-items:center;height:50px}
.categories{flex:0 0 350px;display:flex;align-items:center;gap:11px}
nav{flex:1;display:flex;gap:26px}
nav a{display:flex;align-items:center;gap:4px}
nav,.outlet{padding-bottom:4px}
.promo{background:#12283f;color:#fff;text-align:center;line-height:50px}

/* Intro and addresses */
.intro{padding-top:40px;text-align:center}
.crumbs{display:flex;justify-content:center;gap:12px;font-size:19px;line-height:28px;color:#707070}
.crumbs a{color:#171717}
h1{font-size:56px;line-height:64px;font-weight:700}
.addresses{display:grid;grid-template-columns:repeat(3,1fr);gap:30px;margin-top:80px;margin-bottom:121px;font-size:22px;line-height:34px}
address{font-style:normal}
address h2{font-size:22px;font-weight:600}
.street-lines{font-size:23px}
.hours{color:#707070;line-height:40px}
.hours::before{content:"";display:block;width:114px;height:1px;margin:13px 0 10px;background:#707070}

/* Map */
.map{position:relative;margin-right:3px;overflow:hidden;font-family:Roboto,sans-serif}
.map-canvas{width:100%;height:auto}
.plot path{vector-effect:non-scaling-stroke}
.river path,.rail path,.street path,.border path,#main-roads path{fill:none}
.river path{stroke:#a5c6f8;stroke-width:1px}
.rail path{stroke:#d2d5da;stroke-width:2px}
.street path{stroke:#fff;stroke-width:2px}
.street.wide path{stroke-width:3px}
.border path{stroke:#ee9a94;stroke-width:2px;stroke-dasharray:2 2}
.casing,.lane{stroke-linejoin:round}
.casing{stroke:#f6bb45;stroke-width:6px}
.lane{stroke:#fee8ab;stroke-width:3px}
.t text{text-anchor:middle;paint-order:stroke;stroke:#fff;stroke-width:2px;stroke-opacity:.8}
.t .end{text-anchor:end}
.t .start{text-anchor:start}
.road{font-size:11px;fill:#6b6f76}
.trunk{font-size:11px;fill:#8a5a1c}
.small{font-size:10px;fill:#55595f;letter-spacing:1px}
.mid{font-size:12px;fill:#44484d;letter-spacing:1px}
.big{font-size:14px;font-weight:500;fill:#3c4043;letter-spacing:1px}
.town{font-size:14px;fill:#2b2e31}
.green,.blue,.slate,.grey,.teal,.orange,.rose{font-size:14px}
.green{fill:#1e8a3e}
.blue{fill:#3f7ee8}
.slate{fill:#5f7889}
.grey{fill:#80868b}
.sub{font-size:12px}
.teal{fill:#0e8a9c}
.orange{fill:#e37400}
.rose{fill:#e8453c}
.shields{font-size:9px;font-weight:700;text-anchor:middle}
.shields rect{fill:#6c6ccb}
.shields text{fill:#fff}
.google{font-size:17px;stroke:#fff;stroke-width:2px;paint-order:stroke}
.place{position:absolute;left:9px;top:8px;display:flex;justify-content:space-between;width:284px;height:87px;padding:10px 17px 0 11px;background:#fff;border-radius:2px;box-shadow:0 1px 4px rgba(0,0,0,.3);font-size:12px}
.place-text{display:flex;flex-direction:column}
.place-text strong{font-size:14px;font-weight:500;line-height:16px;color:#000}
.place-text span{margin-top:5px;line-height:16px;color:#5b5b5b}
.place-text a{margin-top:17px;line-height:16px;color:#427fed}
.directions{display:grid;justify-items:center;align-content:start;gap:4px;padding-top:2px;color:#427fed}
.satellite{position:absolute;left:10px;bottom:9px;border:2px solid #fff;border-radius:2px;box-shadow:0 1px 4px rgba(0,0,0,.3)}
.zoom{position:absolute;right:10px;bottom:21px;width:38px;background:#fff;border-radius:2px;box-shadow:0 1px 4px rgba(0,0,0,.3)}
.zoom button{display:grid;place-items:center;width:100%;height:38px}
.zoom button+button{border-top:1px solid #e6e6e6}
.legal{position:absolute;right:0;bottom:0;display:flex;gap:9px;padding:0 5px;background:rgba(245,245,245,.8);color:#222;font-size:10px;line-height:12px}

/* Question form */
.questions{padding:86px 0 100px;text-align:center}
.questions h2{font-size:51px;line-height:64px;font-weight:700}
.lead{margin-top:8px;font-size:32px;line-height:48px;color:#707070}
.fields{display:grid;grid-template-columns:repeat(3,1fr);gap:30px;margin-top:33px}
.field{text-align:left;font-size:16px}
.field label{display:block;font-size:32px;line-height:48px;color:#707070}
.field b{font-weight:400;color:#f00}
.field input,textarea{display:block;width:100%;padding:0 16px;background:#f2f3f5}
.field input{height:60px;margin-top:6px}
.message{margin-top:12px}
textarea{height:180px;margin-top:15px;resize:none}
.send{width:193px;height:62px;margin-top:50px;background:#12283f;color:#fff;font-size:18px;font-weight:600}

/* Footer */
footer{position:relative;padding-top:90px;background:#171717;color:#ccc}
.treats{font-size:44px;line-height:48px;color:#78e821;text-align:center}
.newsletter{display:flex;height:59px;margin:32px 226px 0 79px;padding:3px 5px;background:#212121}
.newsletter input{flex:1;min-width:0;padding:5px 0 0 12px;font-size:26px;color:#fff}
.newsletter input::placeholder{color:#fff;opacity:1}
.newsletter button{width:63px;display:grid;place-items:center;background:#171717}
.links{display:grid;grid-template-columns:repeat(4,254fr) 224fr;margin-top:164px;font-size:19px;line-height:39px}
.links h3{margin-bottom:10px;font-size:24px;line-height:32px;color:#fff;white-space:nowrap}
.bottom{display:grid;grid-template-columns:556fr auto 522fr;align-items:center;height:74px;margin-top:88px;border-top:1px solid #666;font-size:18px}
.bottom p a{color:#78e821}
.social{display:flex;align-items:center;gap:26px}
.cards{display:flex;justify-content:flex-end;gap:5px}
.cards svg{width:35px;height:24px}
.cards text{text-anchor:middle}
.card-i{font:italic 900 12px "Open Sans",sans-serif}
.card-m{font:900 9px "Open Sans",sans-serif}
.card-s{font:700 6px "Open Sans",sans-serif}
.to-top{position:absolute;right:0;bottom:50px;width:53px;height:63px;display:grid;place-items:center;background:#0e0e0e}
```
